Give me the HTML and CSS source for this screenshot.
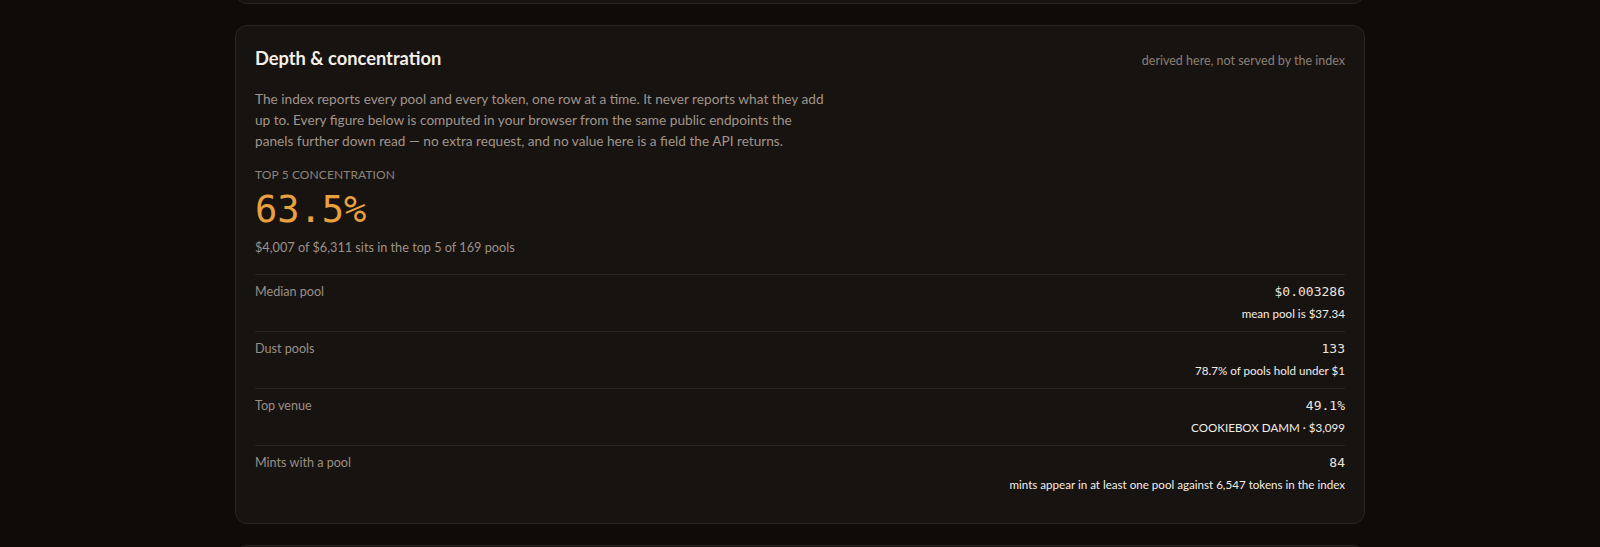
FILE: index.html
```html
<!DOCTYPE html>
<html lang="en">
<head>
<meta charset="utf-8">
<title>Depth &amp; concentration</title>
<link rel="stylesheet" href="styles.css">
</head>
<body>
<div class="page">
  <div class="stack">
    <section class="card card-prev"></section>

    <section class="card">
      <header class="card-head">
        <h2 class="card-title">Depth &amp; concentration</h2>
        <span class="card-note">derived here, not served by the index</span>
      </header>
      <p class="intro">The index reports every pool and every token, one row at a time. It never reports what they add up to. Every figure below is computed in your browser from the same public endpoints the panels further down read — no extra request, and no value here is a field the API returns.</p>

      <div class="hero">
        <div class="hero-label">Top 5 concentration</div>
        <div class="hero-value">63.5%</div>
        <div class="hero-sub">$4,007 of $6,311 sits in the top 5 of 169 pools</div>
      </div>

      <div class="rows">
        <div class="row">
          <div class="row-label">Median pool</div>
          <div class="row-right">
            <div class="row-value">$0.003286</div>
            <div class="row-sub">mean pool is $37.34</div>
          </div>
        </div>
        <div class="row">
          <div class="row-label">Dust pools</div>
          <div class="row-right">
            <div class="row-value">133</div>
            <div class="row-sub">78.7% of pools hold under $1</div>
          </div>
        </div>
        <div class="row">
          <div class="row-label">Top venue</div>
          <div class="row-right">
            <div class="row-value">49.1%</div>
            <div class="row-sub">COOKIEBOX DAMM · $3,099</div>
          </div>
        </div>
        <div class="row">
          <div class="row-label">Mints with a pool</div>
          <div class="row-right">
            <div class="row-value">84</div>
            <div class="row-sub">mints appear in at least one pool against 6,547 tokens in the index</div>
          </div>
        </div>
      </div>
    </section>

    <section class="card card-next"></section>
  </div>
</div>
</body>
</html>
```

FILE: styles.css
```css
html, body {
  margin: 0;
  padding: 0;
  background: #0e0b09;
  height: 100%;
  overflow: hidden;
}

body {
  font-family: "Lato", "Open Sans", sans-serif;
  color: #e9e1d8;
}

.page {
  width: 1600px;
}

.stack {
  width: 1130px;
  margin: -99px auto 0;
  display: flex;
  flex-direction: column;
  gap: 21px;
}

.card {
  background: #171310;
  border: 1px solid #2c2421;
  border-radius: 12px;
  padding: 20px 19px 21px;
}

.card-prev {
  height: 60px;
}

.card-next {
  height: 200px;
}

.card-head {
  display: flex;
  justify-content: space-between;
  align-items: baseline;
}

.card-title {
  margin: 0;
  font-size: 18.3px;
  font-weight: 700;
  line-height: 24px;
  color: #f5efe8;
}

.card-note {
  font-size: 12.5px;
  color: #8b8077;
}

.intro {
  margin: 19px 0 0;
  max-width: 575px;
  font-size: 13.65px;
  line-height: 21px;
  color: #a0958c;
}

.hero {
  margin-top: 15px;
}

.hero-label {
  font-size: 12px;
  line-height: 16px;
  text-transform: uppercase;
  letter-spacing: 0.1px;
  color: #8e837a;
}

.hero-value {
  margin-top: 4px;
  font-family: "DejaVu Sans Mono", monospace;
  font-size: 37px;
  line-height: 46px;
  color: #e9a13f;
}

.hero-sub {
  margin-top: 5px;
  font-size: 12.7px;
  line-height: 18px;
  color: #9c9188;
}

.rows {
  margin-top: 18px;
}

.row {
  display: flex;
  justify-content: space-between;
  align-items: flex-start;
  border-top: 1px solid #2a2320;
  padding: 9px 0 9px;
}

.row-label {
  font-size: 12.6px;
  line-height: 16px;
  color: #9a8f86;
}

.row-right {
  text-align: right;
}

.row-value {
  font-family: "DejaVu Sans Mono", monospace;
  font-size: 13px;
  line-height: 16px;
  color: #ece5dc;
}

.row-sub {
  margin-top: 6px;
  font-size: 11.6px;
  line-height: 16px;
  color: #f4eee8;
}
```
